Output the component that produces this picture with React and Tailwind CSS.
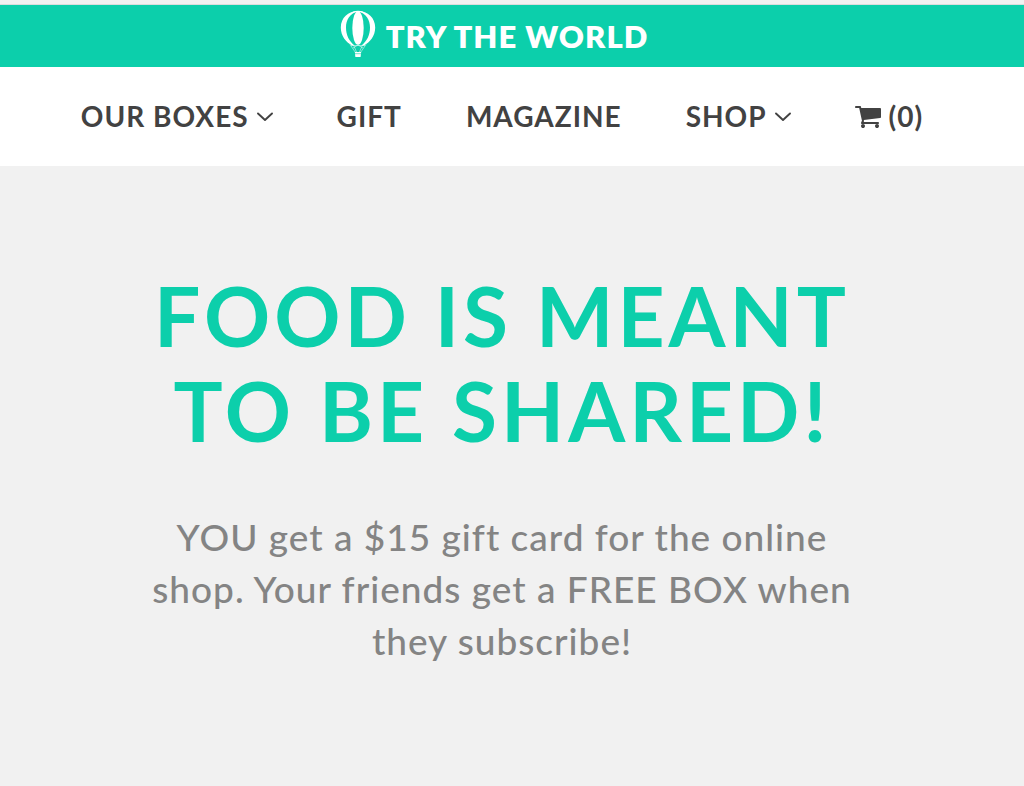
import React from 'react'

const navLinks = [
  { label: 'Our Boxes', hasMenu: true },
  { label: 'Gift' },
  { label: 'Magazine' },
  { label: 'Shop', hasMenu: true },
]

function BalloonIcon() {
  return (
    <svg viewBox="0 0 36 48" className="h-12 w-9 shrink-0" fill="none" aria-hidden="true">
      {/* envelope: middle panel, then the two side panels */}
      <ellipse cx="18" cy="19" rx="5.700" ry="16.800" fill="#fff" />
      <path
        fill="#fff"
        d="M18 2C8 2 .8 9 .8 18.500.8 27 6 33 12 36.500h2.500C9 32 6 26 6 18.500 6 11 9.500 5 18 2zM18 2c10 0 17.200 7 17.200 16.500C35.200 27 30 33 24 36.500h-2.500c5.500-4.500 8.500-10.500 8.500-18C30 11 26.500 5 18 2z"
      />
      <path stroke="#fff" strokeWidth="1.200" d="M13 3.200C16 2.200 20 2.200 23 3.200" />
      {/* ropes */}
      <path stroke="#fff" strokeWidth=".5" d="M10 35.500l5.500 8M26 35.500l-5.500 8M13.500 36l3 7M22.500 36l-3 7M11 36.500h14M13 39l5-3 5 3" />
      <path fill="#fff" d="M14.800 43h6.400l-.6 5h-5.200z" />
      <path stroke="#0ccfab" strokeWidth=".6" d="M15 44.700h6" />
    </svg>
  )
}

function AngleDown() {
  return (
    <svg viewBox="0 0 16 10" className="h-[10px] w-4" fill="none" aria-hidden="true">
      <path d="M1 1.500L8 8l7-6.500" stroke="currentColor" strokeWidth="1.900" strokeLinecap="round" strokeLinejoin="round" />
    </svg>
  )
}

function CartIcon() {
  return (
    <svg viewBox="0 256 1664 1408" className="h-[22px] w-[26px]" fill="currentColor" aria-hidden="true">
      <path d="M640 1536q0 52-38 90t-90 38-90-38-38-90 38-90 90-38 90 38 38 90zm896 0q0 52-38 90t-90 38-90-38-38-90 38-90 90-38 90 38 38 90zm128-1088v512q0 24-16.500 42.500t-40.500 21.500l-1044 122q13 60 13 70 0 16-24 64h920q26 0 45 19t19 45-19 45-45 19h-1024q-26 0-45-19t-19-45q0-11 8-31.500t16-36 21.500-40 15.500-29.500l-177-823h-204q-26 0-45-19t-19-45 19-45 45-19h256q16 0 28.500 6.500t19.500 15.500 13 24.500 8 26 5.500 29.500 4.500 26h1201q26 0 45 19t19 45z" />
    </svg>
  )
}

export default function App() {
  return (
    <div className="flex min-h-screen flex-col bg-[#f1f1f1] font-['Lato',sans-serif]">
      <div className="h-[5px] border-b border-[#dcdcdc] bg-[#f1f1f1]" />

      <header>
        <div className="flex justify-center bg-[#0ccfab] py-1 pr-9">
          <a href="#home" className="flex items-start gap-[10px] text-white">
            <BalloonIcon />
            <span className="text-[31px] leading-[54px] font-extrabold tracking-[1px] uppercase">Try the World</span>
          </a>
        </div>

        <nav className="flex items-center justify-center gap-16 bg-white py-8 pr-5 text-[28px] leading-[35px] font-bold tracking-[1px] text-[#424242]">
          {navLinks.map(link => (
            <a key={link.label} href="#menu" className="flex items-center gap-2 uppercase">
              {link.label}
              {link.hasMenu && <AngleDown />}
            </a>
          ))}
          <a href="#cart" aria-label="Cart, 0 items" className="flex items-center gap-2">
            <CartIcon />
            (0)
          </a>
        </nav>
      </header>

      <main className="flex-1 py-[102px] pr-5 text-center">
        <h1 className="mx-auto max-w-[760px] text-[82px] leading-[95px] font-bold tracking-[4px] text-[#0ccfab] uppercase">
          Food is meant to be shared!
        </h1>
        <p className="mx-auto mt-[53px] max-w-[720px] text-[37px] leading-[52px] font-medium tracking-[1px] text-[#848484]">
          YOU get a $15 gift card for the online shop. Your friends get a FREE BOX when they subscribe!
        </p>
      </main>
    </div>
  )
}
